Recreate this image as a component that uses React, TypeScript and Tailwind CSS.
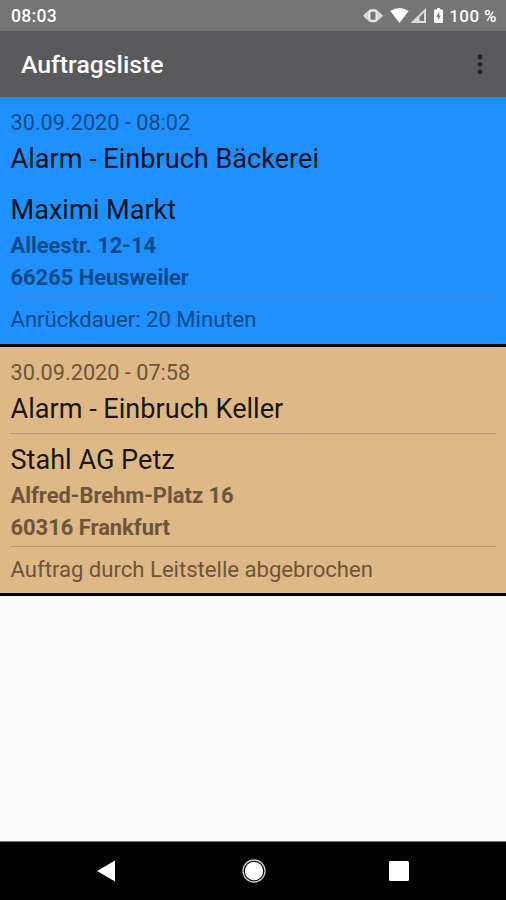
type Order = {
  date: string;
  title: string;
  customer: string;
  street: string;
  city: string;
  note: string;
  color: string;
  line: string;
};

const orders: Order[] = [
  {
    date: "30.09.2020 - 08:02",
    title: "Alarm - Einbruch Bäckerei",
    customer: "Maximi Markt",
    street: "Alleestr. 12-14",
    city: "66265 Heusweiler",
    note: "Anrückdauer: 20 Minuten",
    color: "bg-[#1e90ff] pb-2 text-[#0b4a86]",
    line: "bg-[#4586d8]",
  },
  {
    date: "30.09.2020 - 07:58",
    title: "Alarm - Einbruch Keller",
    customer: "Stahl AG Petz",
    street: "Alfred-Brehm-Platz 16",
    city: "60316 Frankfurt",
    note: "Auftrag durch Leitstelle abgebrochen",
    color: "bg-[#deb887] pb-[7px] text-[#6b563c]",
    line: "bg-[#b99a74]",
  },
];

function StatusBar() {
  return (
    <div className="flex h-[31px] items-center justify-between bg-[#757575] pl-[11px] pr-[9px] font-medium text-white">
      <span className="pt-0.5 text-[17.6px] tracking-[0.3px]">08:03</span>
      <div className="flex items-center">
        <svg width="84" height="24" viewBox="0 0 84 24" fill="#fff">
          <rect x="6.200" y="6.500" width="7.600" height="10.500" rx="2.500" fill="none" stroke="#e6e6e6" strokeWidth="2.600" />
          <path d="M0 11.700L4.800 7V16.500zM20 11.700L15.200 7V16.500z" fill="#dcdcdc" />
          <path d="M27.300 7Q36.500 1 45.700 7L36.500 19Z" />
          <path d="M63 4V19H47.500Z" fill="#dcdcdc" />
          <path d="M61 8.500V17H56.500V13Z" fill="#757575" />
          <path d="M74 4h3v1.500h2q1 0 1 1v11.500q0 1-1 1h-7q-1 0-1-1V6.500q0-1 1-1h2z" />
          <path d="M76.200 8l-3 4.700h1.800v3.300l2.800-4.600h-1.600z" fill="#757575" />
        </svg>
        <span className="pl-[2px] pt-0.5 text-[17px] tracking-[0.4px]">100 %</span>
      </div>
    </div>
  );
}

function Header() {
  return (
    <header className="flex h-[66px] items-center justify-between bg-[#59595b] pl-[21px] pr-[23px]">
      <h1 className="pt-px text-[24.8px] font-medium text-white">Auftragsliste</h1>
      <svg width="6" height="22" viewBox="0 0 6 22" fill="#242426">
        <circle cx="3" cy="4" r="2.400" />
        <circle cx="3" cy="11.400" r="2.400" />
        <circle cx="3" cy="18.800" r="2.400" />
      </svg>
    </header>
  );
}

function OrderCard({ order }: { order: Order }) {
  return (
    <article className={`border-b-[3px] border-black px-2.5 pt-2.5 ${order.color}`}>
      <p className="pl-[0.5px] text-[21.7px] leading-8">{order.date}</p>
      <h2 className="pl-[0.5px] text-[27.1px] leading-10 text-black/90">{order.title}</h2>
      <div className={`mt-1 h-px ${order.line}`} />
      <h3 className="mt-1.5 pl-[0.5px] text-[27.1px] leading-10 text-black/90">{order.customer}</h3>
      <p className="pl-[0.5px] text-[21.9px] font-bold leading-8">{order.street}</p>
      <p className="pl-[0.5px] text-[21.9px] font-bold leading-8">{order.city}</p>
      <div className={`mt-0.5 h-px ${order.line}`} />
      <p className="mb-px mt-1.5 pl-[0.5px] text-[22.1px] leading-8">{order.note}</p>
    </article>
  );
}

function NavigationBar() {
  return (
    <nav className="flex h-[59px] items-center justify-between border-t border-[#777] bg-black pl-24 pr-[96px]">
      <svg width="20" height="24" viewBox="0 0 20 24" fill="#fff">
        <path d="M1 12L19 1.500V22.500Z" />
      </svg>
      <svg className="ml-[3px]" width="26" height="26" viewBox="0 0 26 26">
        <circle cx="13" cy="13" r="11" fill="none" stroke="#ccc" strokeWidth="1.300" />
        <circle cx="13" cy="13" r="9.200" fill="#fff" />
      </svg>
      <svg width="22" height="22" viewBox="0 0 22 22" fill="#fff">
        <rect x="1" y="1" width="20" height="20" rx="1.500" />
      </svg>
    </nav>
  );
}

export default function App() {
  return (
    <div className="flex h-[900px] w-[506px] flex-col overflow-hidden bg-[#fafafa] font-['Roboto',sans-serif]">
      <StatusBar />
      <Header />
      <main className="flex-1">
        {orders.map((order) => (
          <OrderCard key={order.date} order={order} />
        ))}
      </main>
      <NavigationBar />
    </div>
  );
}
